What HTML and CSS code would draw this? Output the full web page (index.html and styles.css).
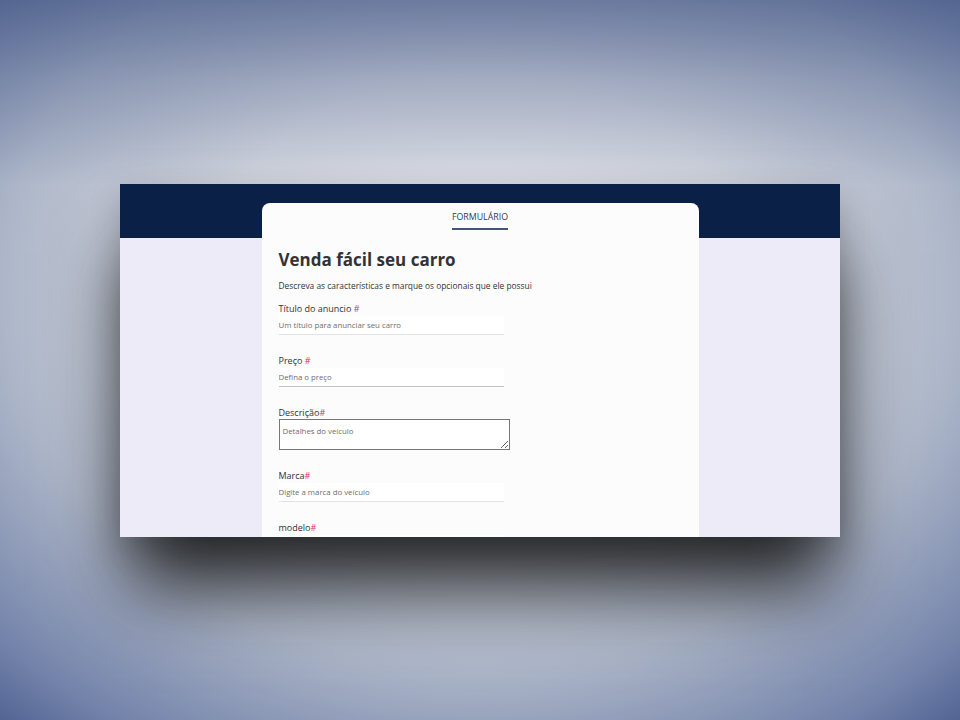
FILE: index.html
```html
<!DOCTYPE html>
<html lang="pt-BR">
<head>
<meta charset="utf-8">
<title>Venda fácil seu carro</title>
<link rel="stylesheet" href="styles.css">
</head>
<body>
<div class="window">
  <div class="card">
    <nav class="tabs"><span class="tab">FORMULÁRIO</span></nav>
    <h1 class="title">Venda fácil seu carro</h1>
    <p class="subtitle">Descreva as características e marque os opcionais que ele possui</p>
    <form class="form">
      <div class="field">
        <label class="label">Título do anuncio <span class="req">#</span></label>
        <input class="input" type="text" placeholder="Um título para anunciar seu carro">
      </div>
      <div class="field">
        <label class="label">Preço <span class="req">#</span></label>
        <input class="input input-dark" type="text" placeholder="Defina o preço">
      </div>
      <div class="field">
        <label class="label">Descrição<span class="req">#</span></label>
        <textarea class="textarea" placeholder="Detalhes do veículo"></textarea>
      </div>
      <div class="field">
        <label class="label">Marca<span class="req">#</span></label>
        <input class="input" type="text" placeholder="Digite a marca do veículo">
      </div>
      <div class="field">
        <label class="label">modelo<span class="req">#</span></label>
        <input class="input" type="text" placeholder="Digite o modelo do veículo">
      </div>
    </form>
  </div>
</div>
</body>
</html>
```
FILE: styles.css
```css
html, body {
  margin: 0;
  padding: 0;
}
body {
  width: 960px;
  height: 720px;
  overflow: hidden;
  display: flex;
  align-items: center;
  justify-content: center;
  font-family: "Open Sans", "Noto Sans", sans-serif;
  background:
    linear-gradient(to bottom, rgba(55, 75, 125, 0.62) 0, rgba(55, 75, 125, 0.3) 80px, rgba(55, 75, 125, 0) 185px),
    radial-gradient(ellipse 80% 85% at 50% 40%, #e6e8ee 0%, #d2d6df 35%, #aeb7c9 62%, #7282a9 85%, #3f5288 100%);
}
.window {
  width: 720px;
  height: 353px;
  overflow: hidden;
  background: linear-gradient(#0b2046 0, #0b2046 54px, #eeebf8 54px);
  box-shadow: 0 60px 70px -8px rgba(15, 15, 15, 0.85), 0 10px 30px rgba(0, 0, 0, 0.18);
}
.card {
  width: 437px;
  height: 400px;
  margin: 19px auto 0;
  padding: 0 17px;
  box-sizing: border-box;
  background: #fcfcfc;
  border-radius: 8px 8px 0 0;
}
.tabs {
  display: flex;
  justify-content: center;
  padding-top: 8px;
}
.tab {
  font-size: 8.8px;
  line-height: 12px;
  color: #2d3a5c;
  padding-bottom: 5px;
  border-bottom: 2px solid #45527a;
}
.title {
  margin: 18px 0 0;
  font-size: 17px;
  line-height: 24px;
  font-weight: 700;
  color: #333;
}
.subtitle {
  margin: 7px 0 0;
  font-size: 8.4px;
  line-height: 14px;
  color: #333;
}
.form {
  margin-top: 10px;
  display: flex;
  flex-direction: column;
  gap: 20px;
}
.field {
  display: flex;
  flex-direction: column;
}
.label {
  font-size: 9px;
  line-height: 12px;
  color: #333;
}
.req {
  color: #e0307a;
}
.input {
  width: 225px;
  height: 19px;
  margin-top: 1px;
  box-sizing: border-box;
  padding: 0;
  border: none;
  border-bottom: 1px solid #e2e2e2;
  background: #fff;
  font-family: inherit;
  font-size: 7.8px;
  outline: none;
}
.input-dark {
  border-bottom-color: #c2c2c2;
}
.input::placeholder,
.textarea::placeholder {
  color: #6e6e6e;
}
.textarea {
  width: 231px;
  height: 31px;
  margin-top: 0;
  box-sizing: border-box;
  padding: 6px 3px;
  border: 1px solid #767676;
  background: #fff;
  font-family: inherit;
  font-size: 7.8px;
}
```
